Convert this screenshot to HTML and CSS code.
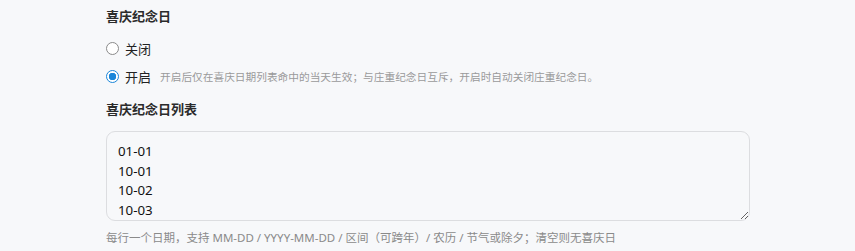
FILE: index.html
```
<!DOCTYPE html>
<html>

<head>
	<meta charset='utf-8'>
	<title>喜庆纪念日</title>
	<meta name='viewport' content='width=device-width, initial-scale=1'>
	<link rel="stylesheet" href="styles.css">
</head>

<body>
	<main class="panel">
		<section class="field">
			<div class="field-title">喜庆纪念日</div>
			<div class="options">
				<label class="option">
					<input type="radio" name="festive" value="off" />
					<span>关闭</span>
				</label>
				<label class="option">
					<input type="radio" name="festive" value="on" checked />
					<span>开启</span>
					<span class="hint">开启后仅在喜庆日期列表命中的当天生效；与庄重纪念日互斥，开启时自动关闭庄重纪念日。</span>
				</label>
			</div>
		</section>
		<section class="field">
			<div class="field-title">喜庆纪念日列表</div>
			<textarea class="dates" rows="4">01-01
10-01
10-02
10-03</textarea>
			<div class="help">每行一个日期，支持 MM-DD / YYYY-MM-DD / 区间（可跨年）/ 农历 / 节气或除夕；清空则无喜庆日</div>
		</section>
	</main>
</body>

</html>
```

FILE: styles.css
```
* {
	box-sizing: border-box;
}

html,
body {
	height: 100%;
}

body {
	margin: 0;
	background: #f7f8fa;
	color: #222;
	font-family: "Noto Sans", "Noto Sans CJK SC", sans-serif;
	font-size: 13px;
}

.panel {
	width: 644px;
	margin-left: 106px;
	padding-top: 6px;
}

.field-title {
	font-size: 13px;
	font-weight: bold;
	color: #2b2b2b;
	line-height: 20px;
}

.options {
	display: flex;
	flex-direction: column;
	gap: 8px;
	margin-top: 12px;
	margin-bottom: 13px;
}

.option {
	display: flex;
	align-items: center;
	height: 20px;
	cursor: pointer;
}

.option input {
	appearance: none;
	-webkit-appearance: none;
	width: 13px;
	height: 13px;
	margin: 0 6px 0 0;
	border: 1px solid #8a8a8a;
	border-radius: 50%;
	background: #fff;
}

.option input:checked {
	border-color: #1a86d9;
	background: radial-gradient(circle, #1a86d9 3.5px, #fff 4px);
}

.hint {
	margin-left: 9px;
	font-size: 10.7px;
	color: #9a9a9a;
}

.dates {
	display: block;
	width: 100%;
	height: 90px;
	margin-top: 12px;
	padding: 10px 11px;
	border: 1px solid #dcdde0;
	border-radius: 9px;
	background: #f7f8fa;
	color: #111;
	font-family: "Noto Sans", "Noto Sans CJK SC", sans-serif;
	font-size: 13.3px;
	line-height: 19.5px;
	overflow: hidden;
}

.help {
	margin-top: 8px;
	font-size: 11.5px;
	color: #8a8a8a;
}
```
